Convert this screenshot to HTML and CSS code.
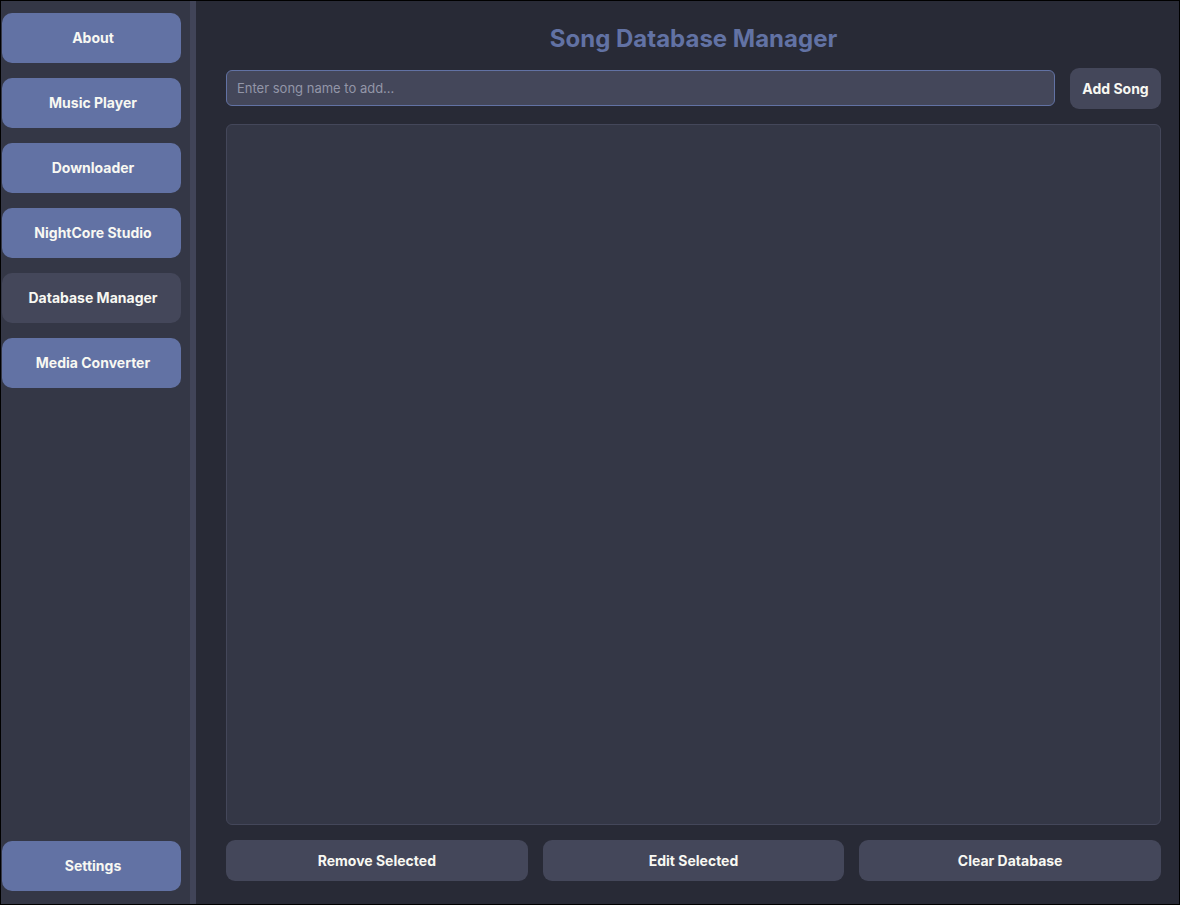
FILE: index.html
```html
<!DOCTYPE html>
<html lang="en">
<head>
<meta charset="utf-8">
<title>Song Database Manager</title>
<link rel="stylesheet" href="styles.css">
</head>
<body>
<div class="window">
  <nav class="sidebar">
    <button class="nav-btn">About</button>
    <button class="nav-btn">Music Player</button>
    <button class="nav-btn">Downloader</button>
    <button class="nav-btn">NightCore Studio</button>
    <button class="nav-btn active">Database Manager</button>
    <button class="nav-btn">Media Converter</button>
    <div class="spacer"></div>
    <button class="nav-btn">Settings</button>
  </nav>
  <div class="splitter"></div>
  <main class="main">
    <h1 class="title">Song Database Manager</h1>
    <div class="add-row">
      <input class="song-input" type="text" placeholder="Enter song name to add...">
      <button class="btn add-btn">Add Song</button>
    </div>
    <div class="song-list"></div>
    <div class="actions">
      <button class="btn">Remove Selected</button>
      <button class="btn">Edit Selected</button>
      <button class="btn">Clear Database</button>
    </div>
  </main>
</div>
</body>
</html>
```
FILE: styles.css
```css
* { box-sizing: border-box; }
html, body { margin: 0; padding: 0; background: #000; }
body { font-family: Inter, "Noto Sans", sans-serif; }

.window {
  width: 1180px;
  height: 905px;
  border: 1px solid #000;
  display: flex;
  background: #282a36;
}

.sidebar {
  width: 189px;
  flex: none;
  background: #343746;
  display: flex;
  flex-direction: column;
  gap: 15px;
  padding: 12px 8px 13px 1px;
}

.spacer { flex: 1; }

.nav-btn {
  height: 50px;
  width: 179px;
  flex: none;
  border: none;
  border-radius: 10px;
  background: #6272a4;
  color: #f8f8f2;
  font-family: Inter, "Noto Sans", sans-serif;
  font-weight: 700;
  font-size: 14px;
  padding: 0 0 2px 3px;
  cursor: pointer;
}

.nav-btn.active { background: #44475a; }

.splitter {
  width: 6px;
  flex: none;
  background: #414458;
}

.main {
  flex: 1;
  display: flex;
  flex-direction: column;
  padding: 23px 18px 23px 30px;
  min-width: 0;
}

.title {
  margin: 0;
  font-size: 24px;
  line-height: 30px;
  font-weight: 700;
  color: #6272a4;
  text-align: center;
}

.add-row {
  margin-top: 14px;
  height: 41px;
  display: flex;
  align-items: center;
  gap: 15px;
}

.song-input {
  flex: 1;
  height: 36px;
  margin-bottom: 2px;
  border: 1px solid #6272a4;
  border-radius: 6px;
  background: #44475a;
  color: #f8f8f2;
  font-family: Inter, "Noto Sans", sans-serif;
  font-size: 13px;
  padding: 0 10px;
  outline: none;
}

.song-input::placeholder { color: #9396a8; }

.btn {
  height: 41px;
  border: none;
  border-radius: 9px;
  background: #44475a;
  color: #f8f8f2;
  font-family: Inter, "Noto Sans", sans-serif;
  font-weight: 700;
  font-size: 14px;
  cursor: pointer;
}

.add-btn {
  width: 91px;
  flex: none;
  padding: 0;
}

.song-list {
  margin-top: 15px;
  flex: 1;
  background: #343746;
  border: 1px solid #44475a;
  border-radius: 6px;
}

.actions {
  margin-top: 15px;
  display: grid;
  grid-template-columns: 1fr 1fr 1fr;
  gap: 15px;
}
```
